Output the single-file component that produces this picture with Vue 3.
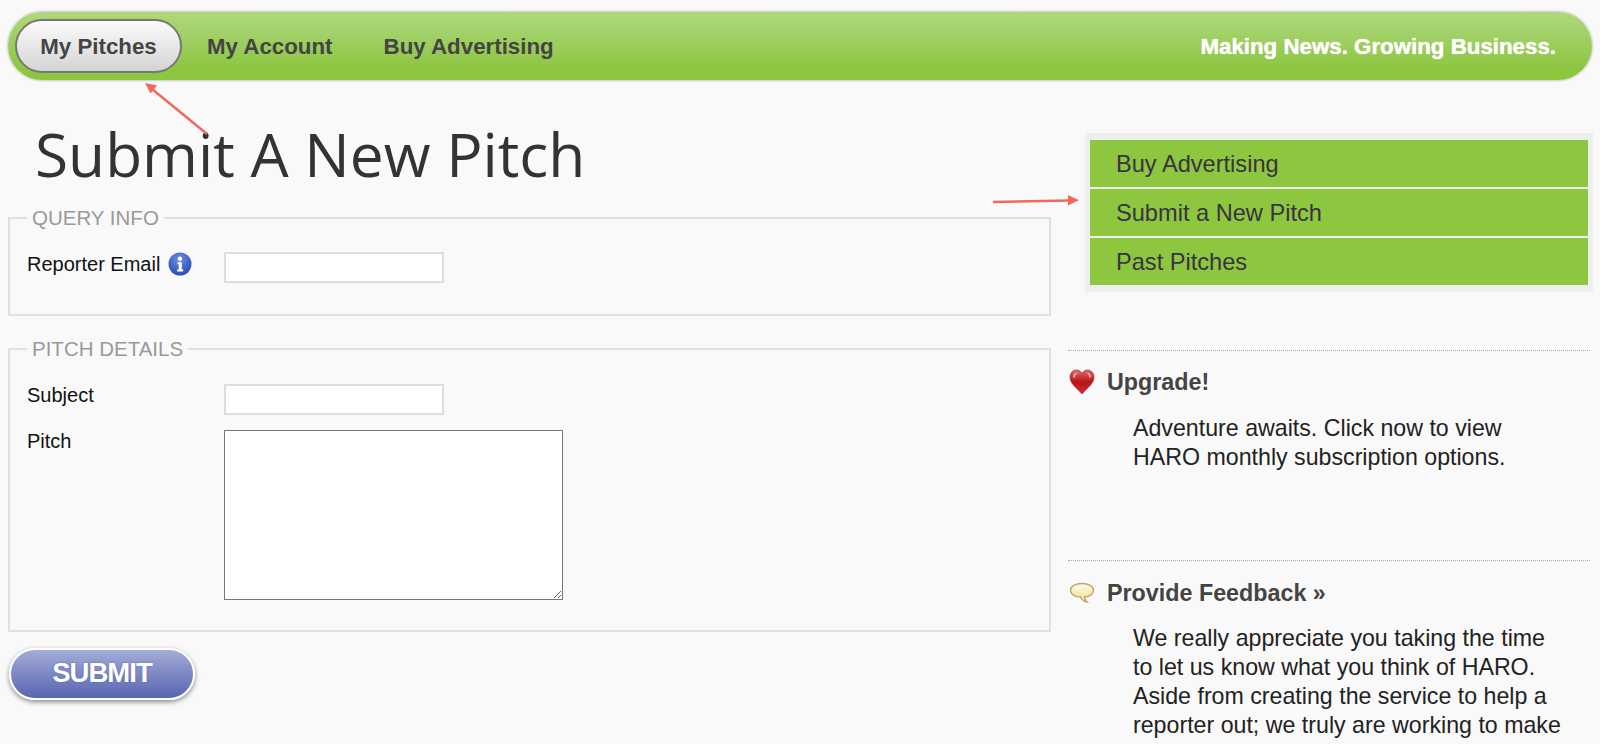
<script setup>
const navItems = ['My Account', 'Buy Advertising']
const menu = ['Buy Advertising', 'Submit a New Pitch', 'Past Pitches']
</script>

<template>
  <div class="page">
    <header class="nav">
      <a class="pill">My Pitches</a>
      <a v-for="item in navItems" :key="item" class="nav-link">{{ item }}</a>
      <span class="slogan">Making News. Growing Business.</span>
    </header>

    <div class="columns">
      <main class="left">
        <h1>Submit A New Pitch</h1>
        <fieldset class="box query">
          <legend>QUERY INFO</legend>
          <div class="row">
            <label class="email-label">Reporter Email
              <svg class="info" viewBox="0 0 24 24" width="24" height="24">
                <defs>
                  <radialGradient id="ig" cx="45%" cy="30%" r="75%">
                    <stop offset="0" stop-color="#6f90e0"/>
                    <stop offset="1" stop-color="#2446b8"/>
                  </radialGradient>
                </defs>
                <circle cx="12" cy="12" r="11.5" fill="url(#ig)"/>
                <circle cx="12" cy="6.8" r="2.2" fill="#fff"/>
                <path d="M9.5 10.2h4.3v7.2h1.4v2H9.2v-2h1.5v-5.2H9.5z" fill="#fff"/>
              </svg>
            </label>
            <input class="field" type="text" />
          </div>
        </fieldset>
        <fieldset class="box details">
          <legend>PITCH DETAILS</legend>
          <div class="row subject">
            <label>Subject</label>
            <input class="field" type="text" />
          </div>
          <div class="row pitch">
            <label>Pitch</label>
            <textarea class="area"></textarea>
          </div>
        </fieldset>
        <button class="submit" type="button">SUBMIT</button>
      </main>

      <aside class="right">
        <nav class="menu">
          <a v-for="item in menu" :key="item">{{ item }}</a>
        </nav>

        <section class="promo upgrade">
          <h3>
            <svg class="ico" viewBox="0 0 26 26" width="26" height="26">
              <defs>
                <linearGradient id="hg" x1="0" y1="0" x2="0" y2="1">
                  <stop offset="0" stop-color="#e8686a"/>
                  <stop offset=".5" stop-color="#b5141a"/>
                  <stop offset="1" stop-color="#d22f2c"/>
                </linearGradient>
              </defs>
              <path d="M13 25C8 19 1 15 1 8c0-4 3-7 6.500-7C10 1 12 2.500 13 4.500 14 2.500 16 1 18.500 1 22 1 25 4 25 8c0 7-7 11-12 17z" fill="url(#hg)" stroke="#9d1a1c" stroke-width=".6"/>
              <path d="M4 7c1-3 4-4 6-3-2 0-4 2-4 4 0 1-2 1-2-1zM22 7c-1-3-3-4-5-3 2 0 3 2 3 4 0 1 2 1 2-1z" fill="#f4b0b0"/>
            </svg>
            Upgrade!
          </h3>
          <p>Adventure awaits. Click now to view<br />HARO monthly subscription options.</p>
        </section>

        <section class="promo feedback">
          <h3>
            <svg class="ico" viewBox="0 0 26 22" width="26" height="22">
              <defs>
                <linearGradient id="bg" x1="0" y1="0" x2="0" y2="1">
                  <stop offset="0" stop-color="#fdfbe8"/>
                  <stop offset="1" stop-color="#efe08c"/>
                </linearGradient>
              </defs>
              <path d="M13 1.500c6.500 0 11.500 2.800 11.500 6.700S20 15 15.500 15c0 2 1 3.500 2.500 5-3-.6-5.500-2.500-6.500-5C6 15 1.500 12 1.500 8.200S6.500 1.500 13 1.500z" fill="url(#bg)" stroke="#c3a676" stroke-width="1.500"/>
            </svg>
            Provide Feedback »
          </h3>
          <p>We really appreciate you taking the time<br />to let us know what you think of HARO.<br />Aside from creating the service to help a<br />reporter out; we truly are working to make<br />your pitching experience the best it can be</p>
        </section>
      </aside>
    </div>

    <svg class="arrows" width="1600" height="744" viewBox="0 0 1600 744">
      <path d="M207 134L152 89" stroke="#f2685a" stroke-width="2.500" fill="none"/>
      <path d="M145 83l12 2.500-6.500 8z" fill="#f2685a"/>
      <path d="M993 202L1069 200.500" stroke="#f2685a" stroke-width="2.500" fill="none"/>
      <path d="M1079 200.300l-11 -5.300v10.500z" fill="#f2685a"/>
    </svg>
  </div>
</template>

<style>
html, body {
  margin: 0;
  height: 744px;
  overflow: hidden;
  background: #f9f9f9;
}
</style>

<style scoped>
.page {
  position: relative;
  height: 744px;
  overflow: hidden;
  box-sizing: border-box;
  padding: 12px 8px 0;
  background: #f9f9f9;
  font-family: "Liberation Sans", Arial, sans-serif;
  color: #222;
}
.nav {
  display: flex;
  align-items: center;
  height: 68px;
  box-sizing: border-box;
  padding: 0 36px 0 7px;
  border-radius: 34px;
  background: linear-gradient(#b0d878 0%, #a0d066 35%, #8dc63f 85%);
  box-shadow: 0 0 3px rgba(90, 90, 110, .6);
}
.pill {
  display: flex;
  align-items: center;
  justify-content: center;
  width: 167px;
  height: 54px;
  box-sizing: border-box;
  padding-top: 1px;
  border: 2px solid #777;
  border-radius: 27px;
  background: linear-gradient(#fbfbfb, #d4d4d4);
  font-size: 22.3px;
  font-weight: 700;
  color: #444;
}
.nav-link {
  margin-left: 25px;
  margin-right: 26px;
  padding-top: 1px;
  font-size: 22.3px;
  font-weight: 700;
  color: #444;
}
.slogan {
  margin-left: auto;
  padding-top: 1px;
  font-size: 22.3px;
  font-weight: 700;
  color: #fff;
  text-shadow: 0 0 1px #fff;
}
.columns {
  display: flex;
  align-items: flex-start;
}
.left {
  width: 1043px;
  flex: none;
}
h1 {
  margin: 38px 0 16px 27px;
  font-family: "Open Sans", sans-serif;
  font-size: 60.4px;
  line-height: 72px;
  font-weight: 400;
  color: #333;
}
.box {
  margin: 0;
  padding: 0;
  border: 2px solid #e0e0e0;
  box-sizing: border-box;
  min-width: 0;
}
legend {
  margin-left: 17px;
  padding: 0 5px;
  font-size: 20.5px;
  line-height: 24px;
  color: #999;
}
.query {
  height: 110px;
}
.details {
  height: 295px;
  margin-top: 21px;
}
.row {
  display: flex;
  align-items: flex-start;
  padding-left: 17px;
}
label {
  display: flex;
  align-items: center;
  gap: 8px;
  width: 197px;
  flex: none;
  font-size: 20px;
  color: #111;
}
.query .row {
  padding-top: 22px;
}
.field {
  width: 220px;
  height: 31px;
  box-sizing: border-box;
  border: 2px solid #ddd;
  background: #fff;
  padding: 0;
}
.subject {
  padding-top: 23px;
}
.pitch {
  padding-top: 15px;
}
.area {
  width: 339px;
  height: 170px;
  box-sizing: border-box;
  border: 1px solid #777;
  background: #fff;
  padding: 0;
  margin: 0;
  resize: both;
}
.submit {
  display: block;
  width: 186px;
  height: 52px;
  margin: 16px 0 0 1px;
  border: 2px solid #fff;
  border-radius: 26px;
  background: linear-gradient(#a3acd8, #5765b0);
  box-shadow: 0 2px 5px rgba(0, 0, 0, .45);
  font-family: "Liberation Sans", Arial, sans-serif;
  font-size: 27.5px;
  font-weight: 700;
  letter-spacing: -1px;
  color: #fff;
  text-shadow: 0 0 2px #5765b0;
  padding: 0 0 2px;
}
.right {
  width: 522px;
  margin-left: 17px;
  flex: none;
}
.menu {
  display: flex;
  flex-direction: column;
  gap: 2px;
  margin: 53px -3px 0 17px;
  padding: 7px 5px;
  background: #eee;
}
.menu a {
  height: 47px;
  box-sizing: border-box;
  padding-left: 26px;
  background: #8dc63f;
  font-size: 23.6px;
  line-height: 48px;
  color: #3a3340;
}
.promo {
  border-top: 1px dotted #aaa;
}
.upgrade {
  margin-top: 58px;
  height: 209px;
}
h3 {
  display: flex;
  align-items: center;
  margin: 0;
  height: 26px;
  font-size: 23.3px;
  font-weight: 700;
  color: #444;
}
.ico {
  flex: none;
  margin: 0 12px 0 1px;
}
.upgrade h3 {
  margin-top: 18px;
}
.feedback h3 {
  margin-top: 19px;
}
.promo p {
  margin: 19px 0 0 65px;
  font-size: 23.2px;
  line-height: 29px;
  color: #222;
}
.feedback p {
  margin-top: 18px;
}
.arrows {
  position: absolute;
  left: 0;
  top: 0;
  pointer-events: none;
}
</style>
